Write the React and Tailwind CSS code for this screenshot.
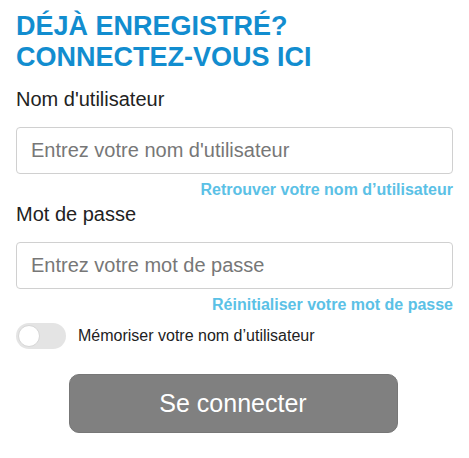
import { useState } from "react";

export default function App() {
  const [remember, setRemember] = useState(false);

  return (
    <div
      className="w-[469px] min-h-[458px] bg-white px-4 pt-[11px]"
      style={{ fontFamily: '"Liberation Sans", Arial, sans-serif' }}
    >
      <h2 className="text-[27px] leading-[31px] font-bold uppercase text-[#128dcf]">
        Déjà enregistré?
        <br />
        Connectez-vous ici
      </h2>

      <label className="block mt-[14px] text-[20px] leading-6 text-[#222]">
        Nom d'utilisateur
      </label>
      <input
        type="text"
        placeholder="Entrez votre nom d'utilisateur"
        className="mt-4 block w-full h-[47px] rounded border border-[#d0d0d0] pl-[14px] text-[20px] text-[#333] placeholder:text-[#777] outline-none"
      />
      <div className="mt-1.5 flex justify-end">
        <a href="#" className="text-[16px] leading-5 font-bold text-[#5bc1e6]">
          Retrouver votre nom d’utilisateur
        </a>
      </div>

      <label className="block mt-0.5 text-[20px] leading-6 text-[#222]">
        Mot de passe
      </label>
      <input
        type="password"
        placeholder="Entrez votre mot de passe"
        className="mt-4 block w-full h-[47px] rounded border border-[#d0d0d0] pl-[14px] text-[20px] text-[#333] placeholder:text-[#777] outline-none"
      />
      <div className="mt-1.5 flex justify-end">
        <a href="#" className="text-[16px] leading-5 font-bold text-[#5bc1e6]">
          Réinitialiser votre mot de passe
        </a>
      </div>

      <div className="mt-2 flex items-center gap-3">
        <button
          type="button"
          onClick={() => setRemember(!remember)}
          className={`flex items-center w-[50px] h-[26px] rounded-full p-[2px] ${
            remember ? "bg-[#128dcf] justify-end" : "bg-[#e4e4e4] justify-start"
          }`}
        >
          <span className="block w-[22px] h-[22px] rounded-full bg-white border border-[#d6d6d6]" />
        </button>
        <span className="text-[16px] leading-5 text-[#222]">
          Mémoriser votre nom d’utilisateur
        </span>
      </div>

      <div className="mt-[25px] flex justify-center pr-[3px]">
        <button
          type="button"
          className="w-[329px] h-[59px] rounded-[10px] bg-[#808080] border border-[#777] text-white text-[25px]"
        >
          Se connecter
        </button>
      </div>
    </div>
  );
}
